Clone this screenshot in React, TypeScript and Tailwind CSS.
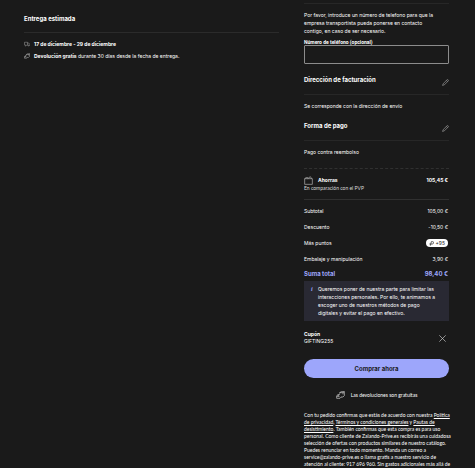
import { useState } from 'react';
import type { ReactNode } from 'react';

const summary = [
  { label: 'Subtotal', value: '105,00 €' },
  { label: 'Descuento', value: '-10,50 €' },
];

function TruckIcon() {
  return (
    <svg className="h-[6px] w-[6px] shrink-0" viewBox="0 0 24 24" fill="none" stroke="#a5a5a5" strokeWidth="2">
      <path d="M2 16V5h12v12H9M14 8h5l4 5v5h-2" />
      <circle cx="6" cy="18" r="2" />
      <circle cx="18" cy="18" r="2" />
    </svg>
  );
}

function ReturnIcon({ className }: { className: string }) {
  return (
    <svg className={className} viewBox="0 0 27 24" fill="none" stroke="#d0d0d0" strokeWidth="2">
      <path d="M11 8V5l5-3h9v12l-4 4h-6M11 5h10l4-3M21 5v5" />
      <path d="M12 11H5l-3 5v6h10l4-4M7 11v4M2 16h7l3 3" />
    </svg>
  );
}

function PencilIcon() {
  return (
    <svg className="h-[7px] w-[7px]" viewBox="0 0 24 24" fill="none" stroke="#b0b0b0" strokeWidth="2">
      <path d="M2 22l2-6L17 3q2-2 4 0t0 4L8 20zM15 5l4 4" />
    </svg>
  );
}

function WalletIcon() {
  return (
    <svg className="h-[9px] w-[9px] shrink-0" viewBox="0 0 27 27" fill="none" stroke="#b8b8b8" strokeWidth="2">
      <path d="M2 8h23v17H2zM2 8l4-3h6M11 8l8-6 4 6" />
    </svg>
  );
}

function EditableSection({ title, children }: { title: string; children: ReactNode }) {
  return (
    <section className="h-[46px]">
      <div className="flex h-[19px] items-start justify-between border-b border-[#272727]">
        <h2 className="text-[6px] leading-[8px] font-bold">{title}</h2>
        <button type="button" aria-label={`Editar ${title}`} className="pt-[3px]">
          <PencilIcon />
        </button>
      </div>
      <p className="pt-[7px] text-[5px] leading-[8px]">{children}</p>
    </section>
  );
}

function SummaryRow({ label, children }: { label: string; children: ReactNode }) {
  return (
    <div className="flex h-4 items-center justify-between">
      <dt>{label}</dt>
      <dd className="pr-[1px]">{children}</dd>
    </div>
  );
}

export default function App() {
  const [phone, setPhone] = useState('');

  return (
    <div className="min-h-screen bg-[#1a1a1a] pr-[26px] pl-6 font-['Inter',sans-serif] text-white">
      <div className="flex gap-[25px]">
        {/* Delivery */}
        <main className="min-w-0 flex-1 pt-[15px]">
          <h2 className="h-[18px] border-b border-[#2b2b2b] text-[6px] leading-[8px] font-bold">
            Entrega estimada
          </h2>
          <ul className="pt-[7px] text-[5px] leading-[8px]">
            <li className="flex h-3 items-start gap-1">
              <span className="pt-[1px]"><TruckIcon /></span>
              <strong>17 de diciembre - 29 de diciembre</strong>
            </li>
            <li className="flex items-start gap-1">
              <span className="pt-[1px]"><ReturnIcon className="h-[6px] w-[6px]" /></span>
              <span><strong>Devolución gratis</strong> durante 30 días desde la fecha de entrega.</span>
            </li>
          </ul>
        </main>

        {/* Order summary */}
        <aside className="w-[145px] shrink-0 pt-[3px] whitespace-nowrap">
          <div className="border-t border-[#272727] pt-[7px]">
            <p className="text-[5px] leading-[8px]">
              Por favor, introduce un número de telefono para que la<br />
              empresa transportista pueda ponerse en contacto<br />
              contigo, en caso de ser necesario.
            </p>
            <label htmlFor="phone" className="block pt-[4px] font-['Roboto',sans-serif] text-[5px] leading-[6px] font-bold">
              Número de teléfono (opcional)
            </label>
            <input
              id="phone"
              type="tel"
              value={phone}
              onChange={(e) => setPhone(e.target.value)}
              className="block h-[19px] w-full rounded-[1px] border border-[#8c8c8c] bg-transparent px-1 text-[5px] outline-none"
            />
          </div>

          <div className="pt-3">
            <EditableSection title="Dirección de facturación">
              Se corresponde con la dirección de envío
            </EditableSection>
            <EditableSection title="Forma de pago">Pago contra reembolso</EditableSection>
          </div>

          {/* Savings */}
          <div className="h-[32px] border-y border-[#303030] pt-[7px] [border-top-style:dashed]">
            <div className="flex h-2 items-center justify-between text-[5px] leading-[8px] font-bold">
              <span className="flex items-center gap-[5px]">
                <WalletIcon />
                Ahorras
              </span>
              <span className="pr-[1px]">105,45 €</span>
            </div>
            <p className="pt-[1px] font-['Lato',sans-serif] text-[5px] leading-[7px] text-[#d8d8d8]">
              En comparación con el PVP
            </p>
          </div>

          <dl className="pt-[3px] text-[5px] leading-[8px]">
            {summary.map((row) => (
              <SummaryRow key={row.label} label={row.label}>{row.value}</SummaryRow>
            ))}
            <SummaryRow label="Más puntos">
              <span className="flex h-[8px] items-center gap-[2px] rounded-full bg-white px-[3px] text-[#1a1a1a]">
                <svg className="h-[5px] w-[5px]" viewBox="0 0 15 15" fill="none" stroke="#1a1a1a" strokeWidth="2">
                  <path d="M4 14L7 2h4q3 0 3 3t-4 4H1" />
                </svg>
                +95
              </span>
            </SummaryRow>
            <SummaryRow label="Embalaje y manipulación">3,90 €</SummaryRow>
            <div className="flex h-[14px] items-center justify-between text-[6px] font-bold text-[#9da6fb]">
              <dt>Suma total</dt>
              <dd className="pr-[1px]">98,40 €</dd>
            </div>
          </dl>

          <div className="flex bg-[#292933] py-[4px] pl-[7px] text-[5px] leading-[8px]">
            <span className="w-[7px] font-['Liberation_Serif',serif] text-[6px] font-bold text-[#9da6fb] italic">i</span>
            <p>
              Queremos poner de nuestra parte para limitar las<br />
              interacciones personales. Por ello, te animamos a<br />
              escoger uno de nuestros métodos de pago<br />
              digitales y evitar el pago en efectivo.
            </p>
          </div>

          {/* Coupon */}
          <div className="flex items-center justify-between pt-[10px] pr-[3px] text-[5px] leading-[7px]">
            <div>
              <p className="font-bold">Cupón</p>
              <p>GIFTING255</p>
            </div>
            <button type="button" aria-label="Eliminar cupón">
              <svg className="h-[7px] w-[7px]" viewBox="0 0 21 21" stroke="#d0d0d0" strokeWidth="2">
                <path d="M1 1l19 19M20 1L1 20" />
              </svg>
            </button>
          </div>

          <button
            type="button"
            className="mt-[14px] block h-[19px] w-full rounded-full bg-[#9da6fb] text-[6px] font-bold text-[#1a1a1a]"
          >
            Comprar ahora
          </button>

          <div className="flex items-center justify-center gap-[6px] pt-[13px] font-['Lato',sans-serif] text-[5px] leading-[8px]">
            <ReturnIcon className="h-[8px] w-[9px]" />
            Las devoluciones son gratuitas
          </div>

          <p className="pt-[13px] font-['Lato',sans-serif] text-[5px] leading-[7px]">
            Con tu pedido confirmas que estás de acuerdo con nuestra <a href="#privacidad" className="underline">Política<br />
            de privacidad</a>, <a href="#terminos" className="underline">Términos y condiciones generales</a> y <a href="#desistimiento" className="underline">Pautas de<br />
            desistimiento</a>. También confirmas que esta compra es para uso<br />
            personal. Como cliente de Zalando-Prive.es recibirás una cuidadosa<br />
            selección de ofertas con productos similares de nuestro catálogo.<br />
            Puedes renunciar en todo momento. Manda un correo a<br />
            service@zalando-prive.es o llama gratis a nuestro servicio de<br />
            atención al cliente: 917 696 960. Sin gastos adicionales más allá de
          </p>
        </aside>
      </div>
    </div>
  );
}
